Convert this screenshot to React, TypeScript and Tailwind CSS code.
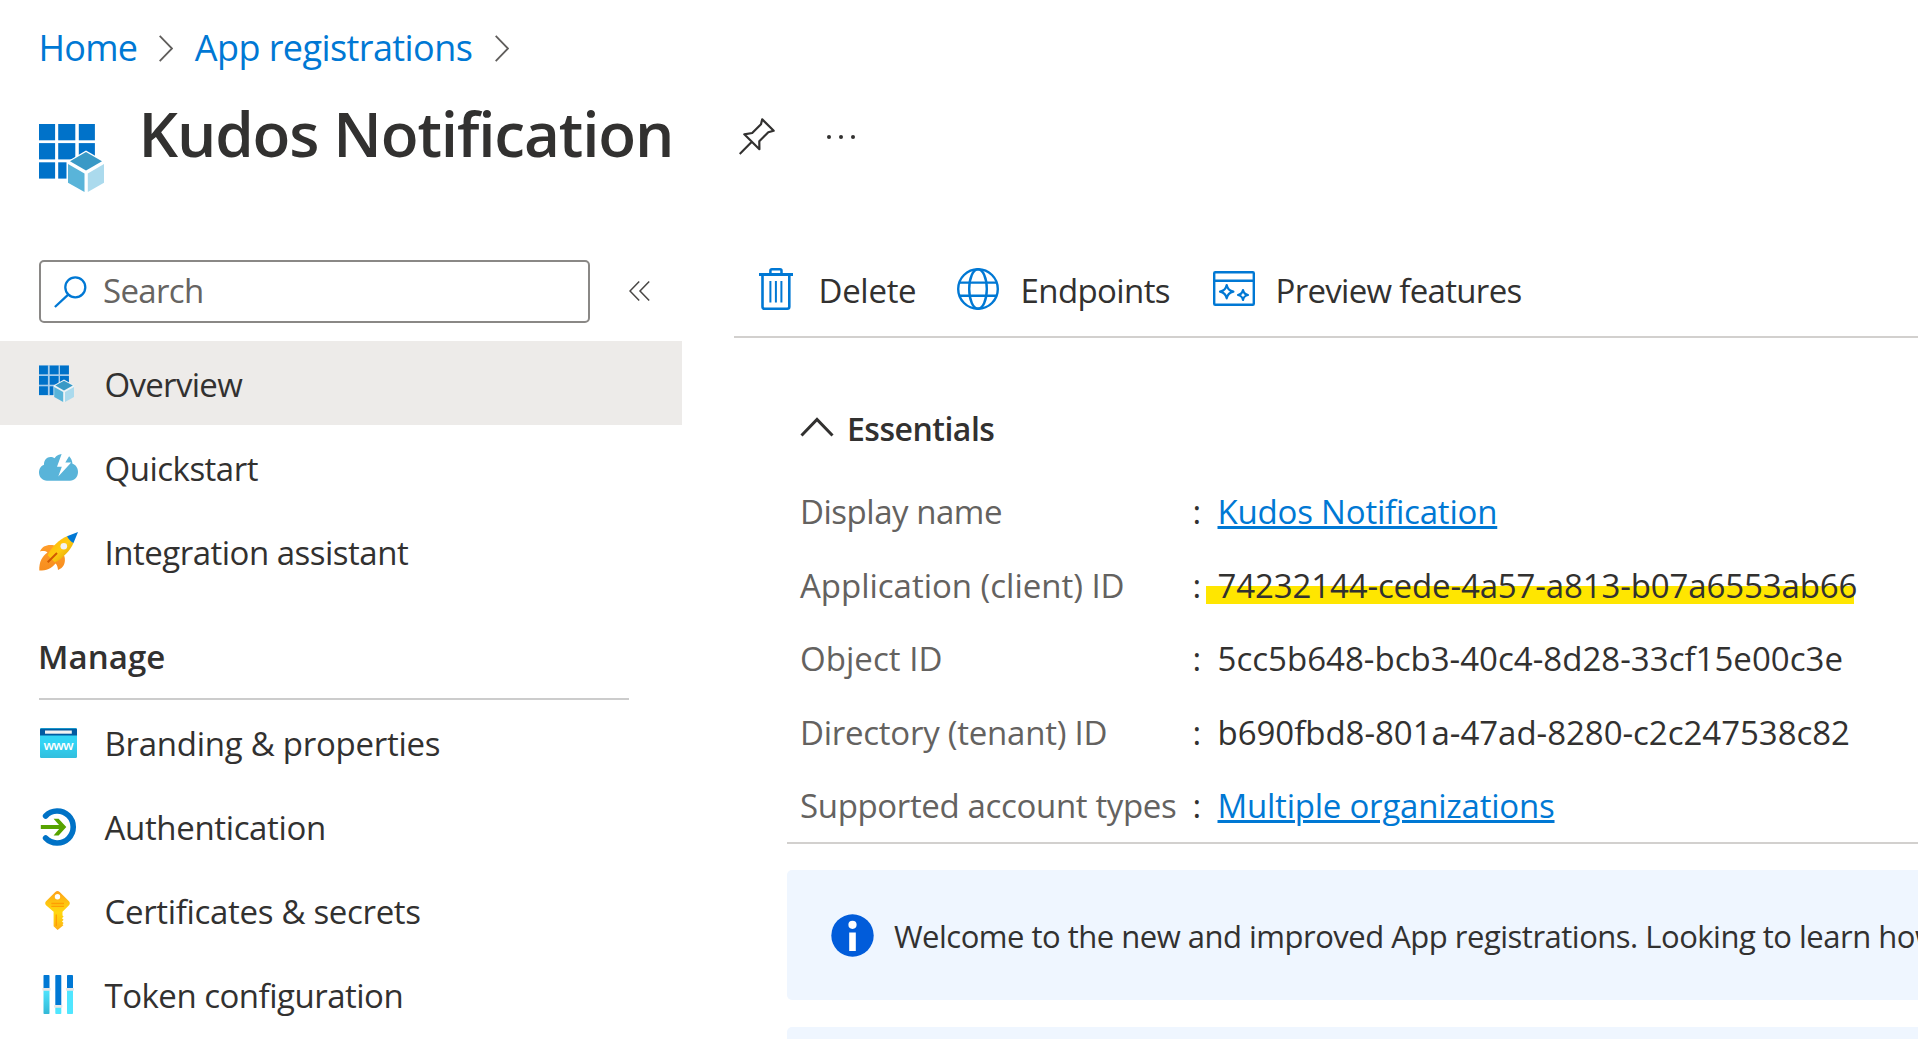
import type { ReactNode } from "react";

function AppIcon({ className }: { className: string }) {
  return (
    <svg viewBox="0 0 65 68" className={className}>
      <g fill="#0072c9">
        {[0, 19.1, 38.3].map((y) =>
          [0, 19.2, 39.8].map((x) => <rect key={`${x}-${y}`} x={x} y={y} width={x === 19.2 ? 17.1 : 16.1} height="16.3" />)
        )}
      </g>
      <path d="M47 26.5 67 38v20L47 70 27.500 58V38Z" className="fill-white" />
      <path d="M47 28 63 37.300 47 46.500 31 37.300Z" fill="#3999c6" />
      <path d="M29 40 45.500 49.500V68L29 58.700Z" fill="#59b4d9" />
      <path d="M65 40 48.800 49.500V68L65 58.700Z" fill="#abdaed" />
    </svg>
  );
}

function SmallAppIcon() {
  return (
    <svg viewBox="0 0 35 37" className="h-[37px] w-[35px]">
      <rect width="30" height="30.500" fill="#a9cdea" />
      <g fill="#0072c9">
        {[0.6, 11, 21.300].map((y) =>
          [0, 10.700, 21].map((x) => <rect key={`${x}-${y}`} x={x} y={y} width="8.900" height="8.700" />)
        )}
      </g>
      <path d="M25 14.500 35.500 20.500V31L25 37 14.500 31V20.500Z" fill="#edf3f6" />
      <path d="M25 15.700 33.800 20.600 25 25.400 16.300 20.600Z" fill="#3999c6" />
      <path d="M15.200 22 24.200 27V37L15.200 32Z" fill="#59b4d9" />
      <path d="M35 22 26 27V37L35 32Z" fill="#abdaed" />
    </svg>
  );
}

function CloudIcon() {
  return (
    <svg viewBox="0 0 39 27" className="h-[27px] w-[39px]">
      <path d="M8 26.700C3.500 26.700 0 23 0 18.700C0 14.600 2.300 11.800 5 10.800C4.800 6 8 3 11.300 3C13.200 3 14.500 3.500 15.500 4.300C17.500 1.300 20.500 0 24 0C29.500 0 33 4 33.500 9.800C37 11 39 14.200 39 18C39 23 35.500 26.700 31 26.700Z" fill="#59b4d9" />
      <path d="M23 -1 18 12.800H22.800L19.300 22.600 32.200 8.400H26.300L30.500 1.500 28 -1Z" className="fill-white" />
    </svg>
  );
}

function RocketIcon() {
  return (
    <svg viewBox="0 0 39 39" className="h-[39px] w-[39px]">
      <defs>
        <linearGradient id="rocketBody" x1="0" y1="0" x2="1" y2="1">
          <stop offset="0" stopColor="#ffb000" />
          <stop offset="0.500" stopColor="#ffcb12" />
          <stop offset="1" stopColor="#d99a00" />
        </linearGradient>
        <linearGradient id="rocketFlame" x1="0" y1="0" x2="0" y2="1">
          <stop offset="0" stopColor="#ff9d2a" />
          <stop offset="1" stopColor="#f78d1e" />
        </linearGradient>
      </defs>
      <path d="M15.500 13.500C9 12 3 14 1 19.500C4 18.800 6.500 19 8.500 20.500C3 24.500 0 30 .3 38.500C7.500 38.500 12.500 36.800 16.500 31.500C18.300 33 18.800 35.500 19 38C24.500 36 27 31 25.500 24.500Z" fill="url(#rocketFlame)" />
      <path d="M28 4.300C21 7 12 15 8.600 23.300L15.800 30.300C24 26.500 31.500 18 34.500 11Z" fill="url(#rocketBody)" />
      <path d="M39 0 28 4.300C30 8 32 10 34.500 11Z" fill="#0078d4" />
      <circle cx="24.800" cy="14.300" r="3.300" fill="#f2f2f2" />
      <path d="M18 21 8.700 30.300" stroke="#d15900" strokeWidth="2" />
    </svg>
  );
}

function WebIcon() {
  return (
    <svg viewBox="0 0 37 30" className="ml-px h-[30px] w-[37px]">
      <defs>
        <linearGradient id="webBody" x1="0" y1="0" x2="0" y2="1">
          <stop offset="0" stopColor="#32d4f5" />
          <stop offset="0.500" stopColor="#32d4f5" />
          <stop offset="1" stopColor="#32bedd" />
        </linearGradient>
      </defs>
      <rect width="37" height="30" rx="1.200" fill="url(#webBody)" />
      <path d="M0 7.500V1.500Q0 .4 1.200 .4H35.800Q37 .4 37 1.500V7.500Z" fill="#005ba1" />
      <rect x="5" y="2.500" width="26.800" height="3.200" fill="#f2f2f2" />
      <text x="18.500" y="21.800" textAnchor="middle" textLength="30" className="fill-white font-['Open_Sans'] text-[13px] font-semibold">www</text>
    </svg>
  );
}

function AuthIcon() {
  return (
    <svg viewBox="0 0 37 38" fill="none" className="ml-px h-[38px] w-[37px]">
      <path d="M5.600 8A16 16 0 1 1 5.600 30" stroke="#0072c6" strokeWidth="5.600" strokeLinecap="round" />
      <path d="M.8 19H23.500" stroke="#57a300" strokeWidth="4" />
      <path d="M13.600 10.700H18.600L26.300 19 18.600 27.500H13.600L20.800 19Z" fill="#57a300" />
    </svg>
  );
}

function KeyIcon() {
  return (
    <svg viewBox="0 0 25 39" className="ml-[6px] h-[39px] w-[25px]">
      <defs>
        <linearGradient id="keyFill" x1="0" y1="0" x2="0" y2="1">
          <stop offset="0" stopColor="#fea11b" />
          <stop offset="0.300" stopColor="#fec310" />
          <stop offset="0.550" stopColor="#ffd70f" />
          <stop offset="0.780" stopColor="#fec611" />
          <stop offset="1" stopColor="#feac19" />
        </linearGradient>
      </defs>
      <path d="M10.300 .9Q12.500 -.9 14.700 .9L24 10.300Q25.600 12.300 24 14.300L17.500 20.800V24.500L18.600 25.600 17 27.200 18.600 28.800 17 30.400 18.600 32 17.500 33.200 18.400 34.200 12.600 39 8.600 35.300V20.800L1 14.300Q-.6 12.300 1 10.300Z" fill="url(#keyFill)" />
      <circle cx="12.500" cy="5.700" r="2.700" className="fill-white" />
      <path d="M6.300 12.500H19M6.300 15.300H19M11.300 23.500V35" stroke="#ff9300" strokeOpacity="0.800" strokeWidth="1.300" />
    </svg>
  );
}

function SlidersIcon() {
  return (
    <svg viewBox="0 0 32 39" className="ml-[3px] h-[39px] w-[32px]">
      <defs>
        <linearGradient id="slider" x1="0" y1="0" x2="0" y2="1">
          <stop offset="0" stopColor="#50e6ff" />
          <stop offset="1" stopColor="#32b8d6" />
        </linearGradient>
      </defs>
      <rect x="1.500" y="14" width="6" height="25" rx=".8" fill="url(#slider)" />
      <rect x="13.300" y="31" width="6" height="8" rx=".8" fill="#50e6ff" />
      <rect x="25" y="14" width="6" height="25" rx=".8" fill="#50e6ff" />
      <g fill="#0078d4">
        <rect x="1.500" width="6" height="14" rx=".8" />
        <rect x="13.300" width="6" height="31" rx=".8" />
        <rect x="25" width="6" height="14" rx=".8" />
      </g>
      <g fill="#e6e6e6">
        <rect x=".4" y="13" width="8.200" height="2.700" rx=".6" />
        <rect x="12.200" y="30" width="8.200" height="2.700" rx=".6" />
        <rect x="23.900" y="13" width="8.100" height="2.700" rx=".6" />
      </g>
    </svg>
  );
}

function TrashIcon() {
  return (
    <svg viewBox="0 0 34 42" fill="none" stroke="#0078d4" className="mb-[2px] h-[42px] w-[34px]">
      <path d="M11.400 6V2.800Q11.400 1.300 12.900 1.300H21Q22.500 1.300 22.500 2.800V6" strokeWidth="2.500" />
      <path d="M0 6.500H34" strokeWidth="2.900" />
      <path d="M3.500 6.500V38.700Q3.500 40.700 5.500 40.700H28.300Q30.300 40.700 30.300 38.700V6.500" strokeWidth="2.600" />
      <path d="M11.400 13V34.500M16.900 13V34.500M22.400 13V34.500" strokeWidth="2" />
    </svg>
  );
}

function GlobeIcon() {
  return (
    <svg viewBox="0 0 42 42" fill="none" stroke="#0078d4" strokeWidth="2.400" className="mb-[2px] h-[42px] w-[42px]">
      <circle cx="21" cy="21" r="19.800" />
      <ellipse cx="21" cy="21" rx="8.800" ry="19.800" />
      <path d="M2.500 14.600H39.500M2.500 27.700H39.500" />
    </svg>
  );
}

function PreviewIcon() {
  return (
    <svg viewBox="0 0 42 35" fill="none" stroke="#0078d4" strokeWidth="2.400" className="mb-[3px] h-[35px] w-[42px]">
      <rect x="1.200" y="1.200" width="39.600" height="32.600" rx="1" />
      <path d="M1.200 9.800H40.800" />
      <path d="M13.700 14Q14.800 19.600 20.400 20.700Q14.800 21.800 13.700 27.400Q12.600 21.800 7 20.700Q12.600 19.600 13.700 14Z" strokeLinejoin="round" strokeWidth="2.200" />
      <path d="M30 19Q30.800 23.200 35 24Q30.800 24.800 30 29Q29.200 24.800 25 24Q29.200 23.200 30 19Z" strokeLinejoin="round" strokeWidth="2.200" />
    </svg>
  );
}

function Crumb() {
  return (
    <svg viewBox="0 0 14 27" fill="none" stroke="#605e5c" strokeWidth="1.800" className="h-[27px] w-[14px]">
      <path d="M.7 .9 13 13.500 .7 26.100" />
    </svg>
  );
}

type Item = { icon: ReactNode; label: string; tracking: string; active?: boolean };

const topItems: Item[] = [
  { icon: <SmallAppIcon />, label: "Overview", tracking: "tracking-[-0.69px]", active: true },
  { icon: <CloudIcon />, label: "Quickstart", tracking: "tracking-[-0.5px]" },
  { icon: <RocketIcon />, label: "Integration assistant", tracking: "tracking-[-0.5px]" },
];

const manageItems: Item[] = [
  { icon: <WebIcon />, label: "Branding & properties", tracking: "tracking-[-0.27px]" },
  { icon: <AuthIcon />, label: "Authentication", tracking: "tracking-[-0.35px]" },
  { icon: <KeyIcon />, label: "Certificates & secrets", tracking: "tracking-[-0.32px]" },
  { icon: <SlidersIcon />, label: "Token configuration", tracking: "tracking-[-0.5px]" },
];

function NavItem({ icon, label, tracking, active }: Item) {
  return (
    <div className={`flex h-[84px] shrink-0 items-center pl-[39px] ${active ? "bg-[#edebe9]" : ""}`}>
      <span className="flex w-[65.500px] shrink-0 items-center pt-px">{icon}</span>
      <span className={`pt-[3px] ${tracking}`}>{label}</span>
    </div>
  );
}

const details = [
  { label: "Display name", lt: "tracking-[-0.47px]", value: "Kudos Notification", vt: "tracking-[-0.2px]", link: true },
  { label: "Application (client) ID", lt: "tracking-[-0.02px]", value: "74232144-cede-4a57-a813-b07a6553ab66", vt: "tracking-[-0.13px]", marked: true },
  { label: "Object ID", lt: "tracking-[0.05px]", value: "5cc5b648-bcb3-40c4-8d28-33cf15e00c3e", vt: "tracking-[0.02px]" },
  { label: "Directory (tenant) ID", lt: "tracking-[-0.25px]", value: "b690fbd8-801a-47ad-8280-c2c247538c82", vt: "tracking-[-0.03px]" },
  { label: "Supported account types", lt: "tracking-[-0.35px]", value: "Multiple organizations", vt: "tracking-[-0.22px]", link: true },
];

export default function App() {
  return (
    <div className="flex h-[1039px] w-[1918px] flex-col overflow-hidden bg-white font-['Open_Sans',sans-serif] text-[33px] leading-[46px] whitespace-nowrap text-[#323130]">
      <nav className="flex h-[94px] shrink-0 items-center pt-[2px] pl-[38.500px] text-[36px] text-[#0078d4]">
        <span className="tracking-[-0.75px]">Home</span>
        <span className="ml-[21.500px]"><Crumb /></span>
        <span className="ml-[22px] tracking-[-0.57px]">App registrations</span>
        <span className="ml-[22.500px]"><Crumb /></span>
      </nav>

      <header className="flex h-[166px] shrink-0 items-start pl-[39px]">
        <AppIcon className="mt-[30px] h-[68px] w-[65px]" />
        <h1 className="ml-[34.500px] w-[600.500px] text-[62px] leading-[78px] font-semibold tracking-[-1.15px]">Kudos Notification</h1>
        <svg viewBox="0 0 36 37" fill="none" stroke="#323130" strokeWidth="2.200" strokeLinejoin="round" className="mt-[24px] h-[37px] w-[36px]">
          <path d="M.7 36 12.600 24M23.200 1.300 34.700 12.700 29.300 14.200 20.300 23.200 20.400 31.200 5.300 16.300 13.200 15 22 6.300Z" />
        </svg>
        <div className="mt-[40.500px] ml-[52px] flex gap-2">
          <i className="size-1 rounded-full bg-[#323130]" />
          <i className="size-1 rounded-full bg-[#323130]" />
          <i className="size-1 rounded-full bg-[#323130]" />
        </div>
      </header>

      <div className="flex min-h-0 flex-1">
        <aside className="flex w-[682px] shrink-0 flex-col">
          <div className="flex h-[81px] shrink-0 items-start pl-[39px]">
            <div className="flex h-[63px] w-[551px] items-center rounded-[5px] border-2 border-[#8a8886] pl-[13px]">
              <svg viewBox="0 0 33 32" fill="none" stroke="#0078d4" strokeWidth="2.300" className="h-[32px] w-[33px]">
                <circle cx="21.300" cy="11.300" r="10" />
                <path d="M14.200 18.600 .9 31" />
              </svg>
              <span className="ml-[16px] pb-px tracking-[-0.65px] text-[#666462]">Search</span>
            </div>
            <svg viewBox="0 0 21 20" fill="none" stroke="#484644" strokeWidth="1.500" className="mt-[21px] ml-[39px] h-[20px] w-[21px]">
              <path d="M10.200 .6 1 10 10.200 19.400M20.200 .6 11 10 20.200 19.400" />
            </svg>
          </div>
          {topItems.map((it) => <NavItem key={it.label} {...it} />)}
          <div className="mr-[53px] ml-[39px] flex h-[107px] shrink-0 items-center border-b-2 border-[#cccccc] pt-[23px] font-semibold">
            <span className="-ml-px tracking-[0.060px]">Manage</span>
          </div>
          <div className="flex flex-col">{manageItems.map((it) => <NavItem key={it.label} {...it} />)}</div>
        </aside>

        <main className="ml-[52px] flex min-w-0 flex-1 flex-col overflow-hidden">
          <div className="flex h-[78px] shrink-0 items-center border-b-2 border-[#d2d0ce] pb-[16px] pl-[25px]">
            <TrashIcon />
            <span className="mt-[2px] ml-[25.500px] w-[138.500px] tracking-[-0.3px]">Delete</span>
            <GlobeIcon />
            <span className="mt-[2px] ml-[21.500px] w-[192.500px] tracking-[-0.600px]">Endpoints</span>
            <PreviewIcon />
            <span className="mt-[2px] ml-[20.500px] tracking-[-0.69px]">Preview features</span>
          </div>

          <div className="flex flex-col pl-[53px]">
            <div className="flex h-[506px] shrink-0 flex-col border-b-2 border-[#d2d0ce] pt-[67.500px] pl-[13px]">
              <div className="flex h-[46px] items-center text-[32px] font-semibold">
                <svg viewBox="0 0 34 20" fill="none" stroke="#323130" strokeWidth="3" className="-mt-[3px] h-[20px] w-[34px]">
                  <path d="M1.500 18.500 17 2.500 32.500 18.500" />
                </svg>
                <span className="ml-[13px] tracking-[-0.500px]">Essentials</span>
              </div>
              <dl className="flex flex-col pt-[24px]">
                {details.map((d) => (
                  <div key={d.label} className="flex h-[73.500px] items-center">
                    <dt className={`w-[392.500px] text-[#646260] ${d.lt}`}>{d.label}</dt>
                    <span className="w-[25px]">:</span>
                    <dd className={`relative ${d.vt} ${d.link ? "text-[#0078d4] underline decoration-[3px] underline-offset-[2px]" : ""}`}>
                      {d.marked && <span className="absolute top-[23px] -left-[11.500px] h-[18px] w-[648px] bg-[#ffe600]" />}
                      <span className="relative">{d.value}</span>
                    </dd>
                  </div>
                ))}
              </dl>
            </div>

            <div className="mt-[26px] flex h-[130px] items-center rounded-l-[5px] bg-[#eff6ff] pl-[43.500px] text-[31px]">
              <svg viewBox="0 0 43 43" className="h-[43px] w-[43px] shrink-0">
                <circle cx="21.500" cy="21.500" r="21.200" fill="#015cda" />
                <circle cx="21.500" cy="10.800" r="4.100" className="fill-white" />
                <rect x="18.200" y="18.500" width="6.600" height="18.500" className="fill-white" />
              </svg>
              <span className="ml-[20.500px] pt-px tracking-[-0.500px]">Welcome to the new and improved App registrations. Looking to learn how</span>
            </div>
            <div className="mt-[27px] h-[130px] shrink-0 rounded-l-[5px] bg-[#eff6ff]" />
          </div>
        </main>
      </div>
    </div>
  );
}
